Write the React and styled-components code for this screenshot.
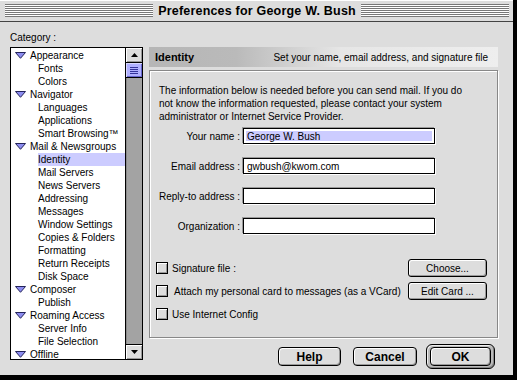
import React from 'react';
import styled, { createGlobalStyle } from 'styled-components';

const GlobalStyle = createGlobalStyle`
  body {
    margin: 0;
    background: #000;
    font-family: "Liberation Sans", Arial, sans-serif;
    font-size: 10px;
    color: #000;
  }
`;

const Window = styled.div`
  width: 514px;
  height: 376px;
  box-sizing: border-box;
  background: #dddddd;
  border-right: 1px solid #000;
  border-bottom: 1px solid #000;
  display: flex;
  flex-direction: column;
`;

const TitleBar = styled.div`
  height: 22px;
  box-sizing: border-box;
  border-bottom: 1px solid #444;
  box-shadow: inset 0 1px #fff;
  display: flex;
  align-items: center;
  padding: 0 4px 0 5px;
`;

const Stripes = styled.div`
  flex: 1;
  height: 13px;
  background: repeating-linear-gradient(to bottom, #777 0 1px, #fff 1px 2px);
`;

const Title = styled.div`
  font-size: 12.5px;
  font-weight: bold;
  padding: 0 5px;
  letter-spacing: 0.2px;
`;

const Body = styled.div`
  flex: 1;
  display: flex;
  gap: 6px;
  padding: 9px 0 0 10px;
`;

const Sidebar = styled.div`
  width: 133px;
  display: flex;
  flex-direction: column;
`;

const CategoryLabel = styled.div`
  height: 14px;
  line-height: 14px;
  margin-bottom: 2px;
`;

const ListBox = styled.div`
  height: 313px;
  box-sizing: border-box;
  border: 1px solid #000;
  background: #fff;
  display: flex;
`;

const List = styled.div`
  flex: 1;
  padding-top: 1px;
  overflow: hidden;
`;

const Row = styled.div`
  height: 13px;
  line-height: 13px;
  display: flex;
  align-items: center;
  padding-left: ${(p) => (p.$child ? '27px' : '4px')};
  white-space: nowrap;
`;

const RowText = styled.span`
  flex: ${(p) => (p.$child ? 1 : 'none')};
  margin-left: ${(p) => (p.$child ? '0' : '4px')};
  background: ${(p) => (p.$selected ? '#ccccff' : 'transparent')};
`;

const ScrollBar = styled.div`
  width: 16px;
  border-left: 1px solid #000;
  background: #a3a3a3;
  box-shadow: inset 1px 0 #8a8a8a;
  display: flex;
  flex-direction: column;
`;

const ArrowBox = styled.div`
  height: 14px;
  background: #dddddd;
  box-shadow: inset 1px 1px #fff, inset -1px -1px #999;
  border-${(p) => (p.$down ? 'top' : 'bottom')}: 1px solid #000;
  display: flex;
  align-items: center;
  justify-content: center;
  margin-${(p) => (p.$down ? 'top' : 'bottom')}: ${(p) => (p.$down ? 'auto' : '0')};
`;

const Thumb = styled.div`
  height: 14px;
  background: #b0b0ff;
  border-bottom: 1px solid #000;
  box-shadow: inset 1px 1px #d8d8ff, inset -1px -1px #6666cc;
  display: flex;
  align-items: center;
  justify-content: center;
`;

const Main = styled.div`
  width: 349px;
  margin-top: 16px;
  display: flex;
  flex-direction: column;
`;

const Header = styled.div`
  height: 20px;
  display: flex;
  align-items: center;
  justify-content: space-between;
  padding: 0 10px 0 6px;
  background: linear-gradient(90deg, #b6b6b6 0%, #bababa 25%, #e6e6e6 55%, #eeeeee 100%);
`;

const HeaderTitle = styled.span`
  font-weight: bold;
  font-size: 11px;
`;

const GroupBox = styled.div`
  margin-top: 3px;
  height: 268px;
  box-sizing: border-box;
  border: 1px solid #888;
  box-shadow: inset 1px 1px #fff, 1px 1px #fff;
  padding: 13px 10px 0 6px;
`;

const Intro = styled.p`
  margin: 0;
  padding-left: 3px;
  line-height: 13px;
  white-space: nowrap;
`;

const FormGrid = styled.div`
  margin: 5px 0 0 3px;
  display: grid;
  grid-template-columns: 81px 192px;
  column-gap: 3px;
  row-gap: 14px;
  align-items: center;
`;

const FieldLabel = styled.label`
  text-align: right;
  white-space: nowrap;
`;

const Field = styled.input`
  height: 16px;
  box-sizing: border-box;
  border: 1px solid #000;
  box-shadow: -1px -1px #999, 1px 1px #fff${(p) => (p.$selected ? ', inset 0 0 0 2px #fff' : '')};
  background: ${(p) => (p.$selected ? '#ccccff' : '#fff')};
  font-family: inherit;
  font-size: 10px;
  padding: 0 3px;
  margin: 0;
  outline: none;
`;

const Options = styled.div`
  margin-top: 25px;
  display: flex;
  flex-direction: column;
  gap: 5px;
`;

const OptionRow = styled.div`
  height: 18px;
  display: flex;
  align-items: center;
`;

const CheckBox = styled.span`
  width: 12px;
  height: 12px;
  box-sizing: border-box;
  border: 1px solid #000;
  background: #dddddd;
  box-shadow: inset 1px 1px #fff, inset -1px -1px #999;
  margin-right: ${(p) => p.$gap || 4}px;
`;

const SmallButton = styled.button`
  margin-left: auto;
  width: 79px;
  height: 18px;
  border: 1px solid #000;
  border-radius: 3px;
  background: #dddddd;
  box-shadow: inset 1px 1px #fff, inset -1px -1px #999;
  font-family: inherit;
  font-size: 10px;
  padding: 0;
`;

const ButtonRow = styled.div`
  margin-top: 6px;
  height: 25px;
  display: flex;
  align-items: center;
  justify-content: flex-end;
  padding-right: 3px;
`;

const PushButton = styled.button`
  width: ${(p) => p.$w}px;
  height: 19px;
  margin-left: ${(p) => p.$ml || 0}px;
  border: 1px solid #000;
  border-radius: 4px;
  background: #dddddd;
  box-shadow: inset 1px 1px #fff, inset -1px -1px #999;
  font-family: inherit;
  font-weight: bold;
  font-size: 12px;
  padding: 0;
`;

const DefaultRing = styled.div`
  margin-left: 9px;
  width: 69px;
  height: 25px;
  box-sizing: border-box;
  border: 1px solid #000;
  border-radius: 6px;
  background: #bbbbbb;
  box-shadow: inset 1px 1px #eee, inset -1px -1px #888;
  display: flex;
  align-items: center;
  justify-content: center;
`;

const categories = [
  { label: 'Appearance' },
  { label: 'Fonts', child: true },
  { label: 'Colors', child: true },
  { label: 'Navigator' },
  { label: 'Languages', child: true },
  { label: 'Applications', child: true },
  { label: 'Smart Browsing™', child: true },
  { label: 'Mail & Newsgroups' },
  { label: 'Identity', child: true, selected: true },
  { label: 'Mail Servers', child: true },
  { label: 'News Servers', child: true },
  { label: 'Addressing', child: true },
  { label: 'Messages', child: true },
  { label: 'Window Settings', child: true },
  { label: 'Copies & Folders', child: true },
  { label: 'Formatting', child: true },
  { label: 'Return Receipts', child: true },
  { label: 'Disk Space', child: true },
  { label: 'Composer' },
  { label: 'Publish', child: true },
  { label: 'Roaming Access' },
  { label: 'Server Info', child: true },
  { label: 'File Selection', child: true },
  { label: 'Offline' },
];

const fields = [
  { label: 'Your name :', value: 'George W. Bush', selected: true },
  { label: 'Email address :', value: 'gwbush@kwom.com' },
  { label: 'Reply-to address :', value: '' },
  { label: 'Organization :', value: '' },
];

function Disclosure() {
  return (
    <svg width="11" height="7" viewBox="0 0 11 7">
      <polygon points="0.5,0.5 10.5,0.5 5.5,6.3" fill="#8c8cf0" stroke="#23235a" strokeWidth="1" />
    </svg>
  );
}

function Arrow({ down }) {
  return (
    <svg width="7" height="4" viewBox="0 0 7 4">
      <polygon points={down ? '0,0 7,0 3.5,4' : '0,4 7,4 3.5,0'} fill="#000" />
    </svg>
  );
}

function Grip() {
  return (
    <svg width="8" height="7" viewBox="0 0 8 7">
      {[0.5, 2.5, 4.5, 6.5].map((y) => (
        <line key={y} x1="0" x2="8" y1={y} y2={y} stroke="#33339a" strokeWidth="1" />
      ))}
    </svg>
  );
}

export default function App() {
  return (
    <>
      <GlobalStyle />
      <Window>
        <TitleBar>
          <Stripes />
          <Title>Preferences for George W. Bush</Title>
          <Stripes />
        </TitleBar>
        <Body>
          <Sidebar>
            <CategoryLabel>Category :</CategoryLabel>
            <ListBox>
              <List>
                {categories.map((c) => (
                  <Row key={c.label} $child={c.child}>
                    {!c.child && <Disclosure />}
                    <RowText $child={c.child} $selected={c.selected}>{c.label}</RowText>
                  </Row>
                ))}
              </List>
              <ScrollBar>
                <ArrowBox><Arrow /></ArrowBox>
                <Thumb><Grip /></Thumb>
                <ArrowBox $down><Arrow down /></ArrowBox>
              </ScrollBar>
            </ListBox>
          </Sidebar>
          <Main>
            <Header>
              <HeaderTitle>Identity</HeaderTitle>
              <span>Set your name, email address, and signature file</span>
            </Header>
            <GroupBox>
              <Intro>
                The information below is needed before you can send mail. If you do
                <br />
                not know the information requested, please contact your system
                <br />
                administrator or Internet Service Provider.
              </Intro>
              <FormGrid>
                {fields.map((f) => (
                  <React.Fragment key={f.label}>
                    <FieldLabel>{f.label}</FieldLabel>
                    <Field readOnly value={f.value} $selected={f.selected} />
                  </React.Fragment>
                ))}
              </FormGrid>
              <Options>
                <OptionRow>
                  <CheckBox />
                  <span>Signature file :</span>
                  <SmallButton>Choose...</SmallButton>
                </OptionRow>
                <OptionRow>
                  <CheckBox $gap={6} />
                  <span>Attach my personal card to messages (as a VCard)</span>
                  <SmallButton>Edit Card ...</SmallButton>
                </OptionRow>
                <OptionRow>
                  <CheckBox />
                  <span>Use Internet Config</span>
                </OptionRow>
              </Options>
            </GroupBox>
            <ButtonRow>
              <PushButton $w={63}>Help</PushButton>
              <PushButton $w={64} $ml={12}>Cancel</PushButton>
              <DefaultRing>
                <PushButton $w={61}>OK</PushButton>
              </DefaultRing>
            </ButtonRow>
          </Main>
        </Body>
      </Window>
    </>
  );
}
